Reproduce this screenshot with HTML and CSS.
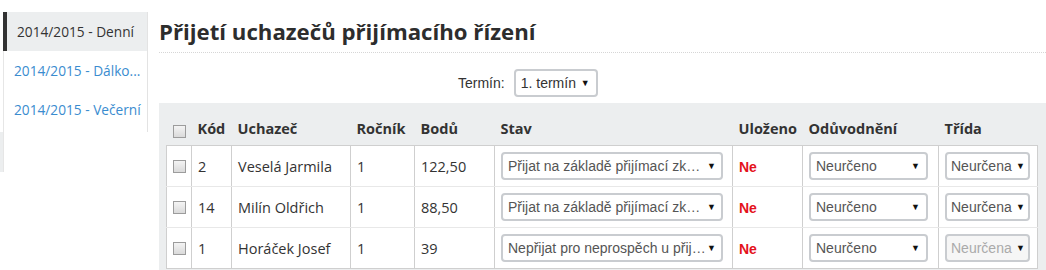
FILE: index.html
```html
<!DOCTYPE html>
<html lang="cs">
<head>
<meta charset="utf-8">
<title>Přijetí uchazečů přijímacího řízení</title>
<link rel="stylesheet" href="styles.css">
</head>
<body>
<div class="layout">
  <aside class="sidebar">
    <nav class="nav">
      <a class="nav-item active" href="#">2014/2015 - Denní</a>
      <a class="nav-item" href="#">2014/2015 - Dálko...</a>
      <a class="nav-item" href="#">2014/2015 - Večerní</a>
    </nav>
    <div class="nav-foot"></div>
  </aside>
  <main class="content">
    <h1 class="title">Přijetí uchazečů přijímacího řízení</h1>
    <div class="filter">
      <span class="filter-label">Termín:</span>
      <div class="select select-term"><span class="select-text">1. termín</span><span class="arrow">▼</span></div>
    </div>
    <div class="panel">
      <table class="grid">
        <colgroup>
          <col style="width:25px"><col style="width:40px"><col style="width:119px"><col style="width:64px"><col style="width:80px"><col style="width:238px"><col style="width:70px"><col style="width:136px"><col style="width:99px">
        </colgroup>
        <thead>
          <tr>
            <th><input type="checkbox" class="cb"></th>
            <th>Kód</th>
            <th>Uchazeč</th>
            <th>Ročník</th>
            <th>Bodů</th>
            <th>Stav</th>
            <th>Uloženo</th>
            <th>Odůvodnění</th>
            <th>Třída</th>
          </tr>
        </thead>
        <tbody>
          <tr>
            <td><input type="checkbox" class="cb"></td>
            <td>2</td>
            <td>Veselá Jarmila</td>
            <td>1</td>
            <td>122,50</td>
            <td><div class="select select-stav"><span class="select-text">Přijat na základě přijímací zkoušky</span><span class="arrow">▼</span></div></td>
            <td><span class="no">Ne</span></td>
            <td><div class="select select-reason"><span class="select-text">Neurčeno</span><span class="arrow">▼</span></div></td>
            <td><div class="select select-class"><span class="select-text">Neurčena</span><span class="arrow">▼</span></div></td>
          </tr>
          <tr>
            <td><input type="checkbox" class="cb"></td>
            <td>14</td>
            <td>Milín Oldřich</td>
            <td>1</td>
            <td>88,50</td>
            <td><div class="select select-stav"><span class="select-text">Přijat na základě přijímací zkoušky</span><span class="arrow">▼</span></div></td>
            <td><span class="no">Ne</span></td>
            <td><div class="select select-reason"><span class="select-text">Neurčeno</span><span class="arrow">▼</span></div></td>
            <td><div class="select select-class"><span class="select-text">Neurčena</span><span class="arrow">▼</span></div></td>
          </tr>
          <tr>
            <td><input type="checkbox" class="cb"></td>
            <td>1</td>
            <td>Horáček Josef</td>
            <td>1</td>
            <td>39</td>
            <td><div class="select select-stav"><span class="select-text">Nepřijat pro neprospěch u přijímací zkoušky</span><span class="arrow">▼</span></div></td>
            <td><span class="no">Ne</span></td>
            <td><div class="select select-reason"><span class="select-text">Neurčeno</span><span class="arrow">▼</span></div></td>
            <td><div class="select select-class disabled"><span class="select-text">Neurčena</span><span class="arrow">▼</span></div></td>
          </tr>
        </tbody>
      </table>
    </div>
  </main>
</div>
</body>
</html>
```

FILE: styles.css
```css
html, body {
  margin: 0;
  padding: 0;
  background: #fff;
}
body {
  font-family: "Open Sans", "Noto Sans", sans-serif;
  font-size: 14.5px;
  color: #333;
  overflow: hidden;
}
.layout {
  display: flex;
  align-items: flex-start;
}
.sidebar {
  width: 148px;
  flex: none;
  padding-top: 12px;
}
.nav {
  margin-left: 3px;
  border-right: 1px solid #e3e3e3;
  border-left: 1px solid #e6e6e6;
  padding-bottom: 3px;
}
.nav-item {
  display: block;
  height: 39px;
  line-height: 39px;
  padding-left: 10px;
  font-size: 13.7px;
  color: #3a8ccf;
  text-decoration: none;
  white-space: nowrap;
  overflow: hidden;
}
.nav-item.active {
  background: #eceeef;
  color: #333;
  border-left: 4px solid #333;
  margin-left: -1px;
  padding-left: 10px;
}
.nav-foot {
  height: 40px;
  width: 148px;
  border-left: 3px solid #eceeef;
  box-sizing: border-box;
}
.nav-foot::before {
  content: "";
  display: block;
  width: 1px;
  height: 40px;
  background: #e6e6e6;
}
.content {
  flex: 1;
  margin-left: 11px;
  min-width: 0;
}
.title {
  margin: 0;
  padding: 19px 0 7px 0;
  font-size: 22.2px;
  font-weight: 700;
  line-height: 26px;
  color: #2d2d2d;
  border-bottom: 1px dotted #d6d6d6;
  white-space: nowrap;
}
.filter {
  display: flex;
  align-items: center;
  gap: 9px;
  padding: 16px 0 6px 299px;
  font-family: "Liberation Sans", Arial, sans-serif;
  font-size: 14px;
}
.filter-label {
  color: #333;
}
.select {
  display: flex;
  align-items: center;
  box-sizing: border-box;
  height: 28px;
  border: 2px solid #c9ccd0;
  border-radius: 4px;
  background: #fff;
  padding: 0 5px 0 5px;
  font-family: "Liberation Sans", Arial, sans-serif;
  font-size: 14px;
  color: #555;
}
.select-text {
  flex: 1;
  min-width: 0;
  white-space: nowrap;
  overflow: hidden;
  text-overflow: ellipsis;
}
.arrow {
  flex: none;
  font-size: 9px;
  color: #111;
  margin-left: 3px;
}
.select-term {
  width: 84px;
  color: #333;
  padding-left: 5px;
  padding-right: 6px;
}
.select-stav { width: 222px; padding-left: 5px; padding-right: 5px; }
.select-stav .arrow { margin-left: 1px; }
.select-reason { width: 119px; padding-right: 6px; }
.select-class { width: 85px; padding-left: 4px; padding-right: 3px; }
.select-class .arrow { margin-left: 2px; }
.select.disabled {
  background: #f6f6f6;
  color: #aaa;
}
.panel {
  background: #eceeef;
  padding: 0 9px 8px 7px;
}
.grid {
  border-collapse: collapse;
  table-layout: fixed;
  width: 871px;
}
.grid th {
  text-align: left;
  font-weight: 700;
  font-size: 14.5px;
  color: #333;
  height: 35px;
  vertical-align: bottom;
  padding: 0 0 7px 6px;
  white-space: nowrap;
}
.grid td {
  background: #fff;
  height: 40px;
  padding: 0 0 0 6px;
  border-left: 1px solid #cfcfcf;
  border-right: 1px solid #cfcfcf;
  border-top: 1px solid #e8e8e8;
  border-bottom: 1px solid #e8e8e8;
  font-size: 14.5px;
  vertical-align: middle;
  white-space: nowrap;
}
.grid tbody tr:first-child td {
  border-top: 1px solid #cfcfcf;
}
.grid tbody tr:last-child td {
  border-bottom: 1px solid #cfcfcf;
}
.cb {
  appearance: none;
  -webkit-appearance: none;
  display: block;
  margin: 0;
  width: 13px;
  height: 13px;
  border: 1px solid #9c9c9c;
  background: linear-gradient(#f4f4f4, #dadada);
  box-sizing: border-box;
}
.no {
  font-family: "Liberation Sans", Arial, sans-serif;
  font-weight: 700;
  font-size: 14px;
  color: #e4131b;
}
```
